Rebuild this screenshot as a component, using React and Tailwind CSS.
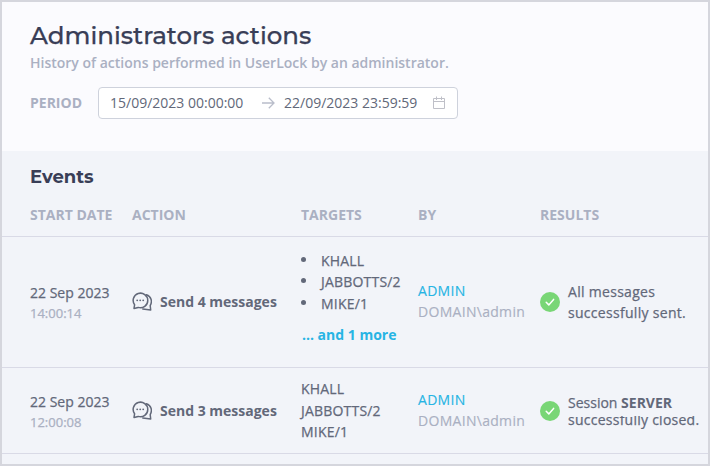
const COLS = "grid grid-cols-[102px_169px_117px_122px_1fr] pl-7";

function ChatIcon() {
  return (
    <svg className="h-5 w-5 shrink-0" viewBox="0 0 20 20" fill="none" stroke="#626879" strokeWidth="1.5" strokeLinejoin="round" strokeLinecap="round">
      <path d="M2 16.4 L2.6 12.8 A7.3 7.3 0 1 1 6.2 15.4 Z" />
      <path d="M14.4 2.8 C19.3 4.4 20.6 9.6 18.2 13.6 L18.7 18 L10.8 17" />
      <g fill="#626879" stroke="none">
        <circle cx="5.2" cy="8.3" r="0.9" />
        <circle cx="8.2" cy="8.3" r="0.9" />
        <circle cx="11.2" cy="8.3" r="0.9" />
      </g>
    </svg>
  );
}

function CheckIcon() {
  return (
    <svg className="h-5 w-5 shrink-0" viewBox="0 0 20 20">
      <circle cx="10" cy="10" r="10" fill="#79d676" />
      <path d="M6.2 10.3 L8.8 12.9 L13.6 7.4" fill="none" stroke="#fff" strokeWidth="1.5" strokeLinecap="round" strokeLinejoin="round" />
    </svg>
  );
}

function DateCell({ date, time, className }) {
  return (
    <div className={`[-webkit-text-stroke:0.25px] ${className}`}>
      <div className="h-5 leading-5">{date}</div>
      <div className="h-5 text-[13px] leading-5 text-[#aab0c2]">{time}</div>
    </div>
  );
}

function ActionCell({ label, className }) {
  return (
    <div className={`flex items-center gap-2 ${className}`}>
      <ChatIcon />
      <span className="font-bold leading-5">{label}</span>
    </div>
  );
}

function ByCell({ className }) {
  return (
    <div className={`tracking-[0.3px] [-webkit-text-stroke:0.15px] ${className}`}>
      <div className="leading-[21px] text-[#27b4e4]">ADMIN</div>
      <div className="leading-[21px] text-[#aab0c2]">DOMAIN\admin</div>
    </div>
  );
}

export default function App() {
  return (
    <div className="flex h-[466px] w-[710px] flex-col overflow-hidden border-2 border-[#d5d6dd] bg-[#fbfbfe] font-['Open_Sans','Noto_Sans',sans-serif] text-sm font-medium whitespace-nowrap text-[#626879]">
      <header className="h-[149px] shrink-0 pl-7 pt-4">
        <h1 className="h-[35px] font-['Montserrat','Inter',sans-serif] text-[24.5px] leading-[34px] font-medium text-[#393e57] [-webkit-text-stroke:0.25px]">Administrators actions</h1>
        <p className="h-[20px] leading-[20px] font-semibold text-[#aab0c2]">History of actions performed in UserLock by an administrator.</p>
        <div className="mt-[14px] flex items-center">
          <span className="w-[68px] font-bold text-[#aab0c2]">PERIOD</span>
          <div className="flex h-8 w-[360px] items-center rounded border border-[#ced2dc] bg-white pl-[11px] font-normal">
            <span className="w-[152px]">15/09/2023 00:00:00</span>
            <svg className="h-3 w-[22px] shrink-0" viewBox="0 0 22 12" fill="none" stroke="#b9bdca" strokeWidth="1.3">
              <path d="M0 6H12M6.8 .8L12 6L6.8 11.2" />
            </svg>
            <span className="w-[148px]">22/09/2023 23:59:59</span>
            <svg className="h-[14px] w-[14px] shrink-0" viewBox="0 0 14 14" fill="none" stroke="#bfc0c8" strokeWidth="1">
              <path d="M1.5 2.5H12.5V12.5H1.5ZM1.5 5.5H12.5M4.5 .5V4M9.5 .5V4" />
            </svg>
          </div>
        </div>
      </header>
      <main className="grow bg-[#f2f4f9]">
        <h2 className="h-[54px] pl-7 pt-3.5 font-['Montserrat','Inter',sans-serif] text-[18px] leading-6 font-bold text-[#393e57]">Events</h2>
        <div className={`${COLS} h-[32px] border-b border-[#d9dae6] font-bold leading-5 text-[#aab0c2]`}>
          <span>START DATE</span>
          <span>ACTION</span>
          <span>TARGETS</span>
          <span>BY</span>
          <span>RESULTS</span>
        </div>
        <div className={`${COLS} h-[131px] border-b border-[#d9dae6]`}>
          <DateCell className="pt-[46px]" date="22 Sep 2023" time="14:00:14" />
          <ActionCell className="h-[130px]" label="Send 4 messages" />
          <div className="pt-[13px]">
            <ul className="tracking-[0.2px] [-webkit-text-stroke:0.25px]">
              {["KHALL", "JABBOTTS/2", "MIKE/1"].map((name) => (
                <li key={name} className="flex h-[21.3px] items-center leading-[21px]">
                  <span className="mb-0.5 mr-[15px] h-[5px] w-[5px] rounded-full bg-[#626879]" />
                  {name}
                </li>
              ))}
            </ul>
            <a className="mt-[10px] block pl-px font-bold leading-[21px] text-[#27b4e4]">... and 1 more</a>
          </div>
          <ByCell className="pt-[43px]" />
          <div className="flex items-center gap-2">
            <CheckIcon />
            <p className="leading-[21px] tracking-[0.3px] [-webkit-text-stroke:0.25px]">All messages<br />successfully sent.</p>
          </div>
        </div>
        <div className={`${COLS} h-[86px] border-b border-[#d9dae6]`}>
          <DateCell className="pt-6" date="22 Sep 2023" time="12:00:08" />
          <ActionCell className="h-[85px]" label="Send 3 messages" />
          <div className="pt-[10px] leading-[21.5px] tracking-[0.2px] [-webkit-text-stroke:0.25px]">KHALL<br />JABBOTTS/2<br />MIKE/1</div>
          <ByCell className="pt-[21px]" />
          <div className="flex h-[85px] items-center gap-2">
            <CheckIcon />
            <div className="pt-0.5">
              <div className="h-[21px] leading-[15px]"><span className="[-webkit-text-stroke:0.25px]">Session</span> <b>SERVER</b></div>
              <div className="flex h-[13px] items-end overflow-hidden leading-[18px] tracking-[0.25px] [-webkit-text-stroke:0.25px]">successfully closed.</div>
            </div>
          </div>
        </div>
      </main>
    </div>
  );
}
